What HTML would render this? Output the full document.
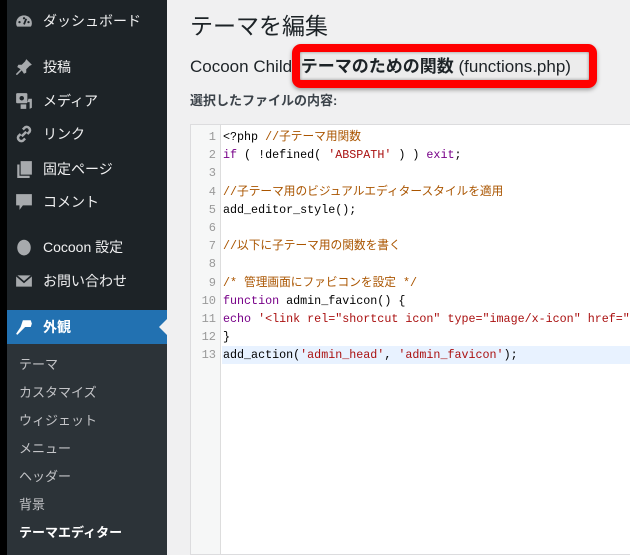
<!DOCTYPE html>
<html><head><meta charset="utf-8"><style>
*{margin:0;padding:0;box-sizing:border-box}
body{width:630px;height:555px;overflow:hidden;background:#f0f0f1;font-family:"Liberation Sans","Noto Sans CJK JP",sans-serif;position:relative}
#strip{position:absolute;left:0;top:0;width:7px;height:555px;background:#000}
#side{position:absolute;left:7px;top:0;width:160px;height:555px;background:#1d2327}
.it{position:absolute;left:0;width:160px;height:30px;color:#f0f0f1;font-size:14px;line-height:30px}
.it .ic{position:absolute;left:8px;top:6px;width:18px;height:18px;color:#a7aaad}
.it .tx{position:absolute;left:36px}
#app{position:absolute;left:7px;top:310px;width:160px;height:34px;background:#2271b1;color:#fff;font-size:14px;font-weight:bold;line-height:34px}
#app .tx{position:absolute;left:36px}
#app:after{content:"";position:absolute;right:0;top:9px;border:8px solid transparent;border-right-color:#f0f0f1}
#sub{position:absolute;left:7px;top:344px;width:160px;height:211px;background:#2c3338}
.s{position:absolute;left:12px;color:#c3c4c7;font-size:13px;line-height:20px}
h1{position:absolute;left:190px;top:10px;font-size:23px;font-weight:400;color:#1d2327;line-height:32px}
#h2{position:absolute;left:190px;top:55px;font-size:17px;color:#1d2327;line-height:24px;white-space:nowrap}
#box{position:absolute;left:292px;top:44px;width:305px;height:44px;border:8px solid #f00;border-radius:9px;box-shadow:0 2px 4px rgba(0,0,0,.35), inset 0 0 3px rgba(0,0,0,.4);background:#ececec}
#lbl{position:absolute;left:190px;top:92px;font-size:13px;font-weight:bold;color:#3c434a;line-height:18px}
#ed{position:absolute;left:190px;top:124px;width:440px;height:431px;background:#fff;border:1px solid #dcdcde;border-right:none;overflow:hidden}
#gut{position:absolute;left:0;top:0;width:30px;height:100%;background:#f6f7f7;border-right:1px solid #ddd}
.ln{position:absolute;left:0;width:25px;text-align:right;color:#999;font-family:"Liberation Mono","Noto Sans CJK JP",monospace;font-size:12px;line-height:18.2px}
.cl{position:absolute;left:32px;white-space:pre;font-family:"Liberation Mono","Noto Sans CJK JP",monospace;font-size:11.7px;line-height:18.2px;color:#000}
.c{color:#a50}.k{color:#708}.st{color:#a11}
#hl{position:absolute;left:31px;top:221px;width:420px;height:18px;background:#e8f2ff}
</style></head><body>
<div id="strip"></div>
<div id="side">
<div class="it" style="top:6px"><svg class="ic" viewBox="0 0 16 16"><path d="M8 3a7 7 0 0 0-7 7c0 1.5.5 2.5 1 3h12c.5-.5 1-1.5 1-3a7 7 0 0 0-7-7z" fill="#a7aaad"/><path d="M8 11l2-5" stroke="#1d2327" stroke-width="1.6"/><circle cx="4" cy="9" r="1" fill="#1d2327"/><circle cx="12" cy="9" r="1" fill="#1d2327"/><circle cx="8" cy="5.5" r="1" fill="#1d2327"/></svg><span class="tx">ダッシュボード</span></div>
<div class="it" style="top:52px"><svg class="ic" viewBox="0 0 16 16"><path d="M10 1l5 5-2 1-3 3 0 3-2 1-2-3-4 4-1 0 0-1 4-4-3-2 1-2 3 0 3-3z" fill="#a7aaad"/></svg><span class="tx">投稿</span></div>
<div class="it" style="top:86px"><svg class="ic" viewBox="0 0 16 16"><rect x="1" y="1" width="10" height="9" rx="1" fill="#a7aaad"/><circle cx="6" cy="5.5" r="2" fill="#1d2327"/><path d="M12 6h3v8l-2 1v-6h-2z M5 11h5v4H5z" fill="#a7aaad"/></svg><span class="tx">メディア</span></div>
<div class="it" style="top:119px"><svg class="ic" viewBox="0 0 16 16"><path d="M6 10l4-4 M7 4l2-2a3 3 0 0 1 4 4l-2 2 M9 12l-2 2a3 3 0 0 1-4-4l2-2" stroke="#a7aaad" stroke-width="2.2" fill="none"/></svg><span class="tx">リンク</span></div>
<div class="it" style="top:154px"><svg class="ic" viewBox="0 0 16 16"><path d="M5 1h10v12H5z" fill="#a7aaad"/><path d="M2 4h2v10h9v2H2z" fill="#a7aaad"/></svg><span class="tx">固定ページ</span></div>
<div class="it" style="top:187px"><svg class="ic" viewBox="0 0 16 16"><path d="M1 1h14v10H7l-3 4v-4H1z" fill="#a7aaad"/></svg><span class="tx">コメント</span></div>
<div class="it" style="top:232px"><svg class="ic" viewBox="0 0 16 16"><ellipse cx="8" cy="8.5" rx="6" ry="7" fill="#a7aaad"/></svg><span class="tx">Cocoon 設定</span></div>
<div class="it" style="top:266px"><svg class="ic" viewBox="0 0 16 16"><rect x="1" y="3" width="14" height="10" fill="#a7aaad"/><path d="M1 3l7 6 7-6" stroke="#1d2327" stroke-width="1.5" fill="none"/></svg><span class="tx">お問い合わせ</span></div>
</div>
<div id="app"><svg style="position:absolute;left:8px;top:8px" width="18" height="18" viewBox="0 0 16 16"><path d="M7 2l7 0 1 3-1 3-5 0-2 2-5 5-1-1 4-6z" fill="#fff"/></svg><span class="tx">外観</span></div>
<div id="sub">
<div class="s" style="top:11px">テーマ</div>
<div class="s" style="top:39px">カスタマイズ</div>
<div class="s" style="top:67px">ウィジェット</div>
<div class="s" style="top:95px">メニュー</div>
<div class="s" style="top:123px">ヘッダー</div>
<div class="s" style="top:151px">背景</div>
<div class="s" style="top:179px;color:#fff;font-weight:bold">テーマエディター</div>
</div>
<h1>テーマを編集</h1>
<div id="box"></div>
<div id="h2">Cocoon Child <b style="margin-left:4px">テーマのための関数</b> (functions.php)</div>
<div id="lbl">選択したファイルの内容:</div>
<div id="ed">
<div id="gut"></div>
<div id="hl"></div>
<div class="ln" style="top:3px">1<br>2<br>3<br>4<br>5<br>6<br>7<br>8<br>9<br>10<br>11<br>12<br>13</div>
<div class="cl" style="top:3px">&lt;?php <span class="c">//子テーマ用関数</span>
<span class="k">if</span> ( !defined( <span class="st">'ABSPATH'</span> ) ) <span class="k">exit</span>;

<span class="c">//子テーマ用のビジュアルエディタースタイルを適用</span>
add_editor_style();

<span class="c">//以下に子テーマ用の関数を書く</span>

<span class="c">/* 管理画面にファビコンを設定 */</span>
<span class="k">function</span> admin_favicon() {
<span class="k">echo</span> <span class="st">'&lt;link rel="shortcut icon" type="image/x-icon" href="</span>
}
add_action(<span class="st">'admin_head'</span>, <span class="st">'admin_favicon'</span>);</div>
</div>
</body></html>
